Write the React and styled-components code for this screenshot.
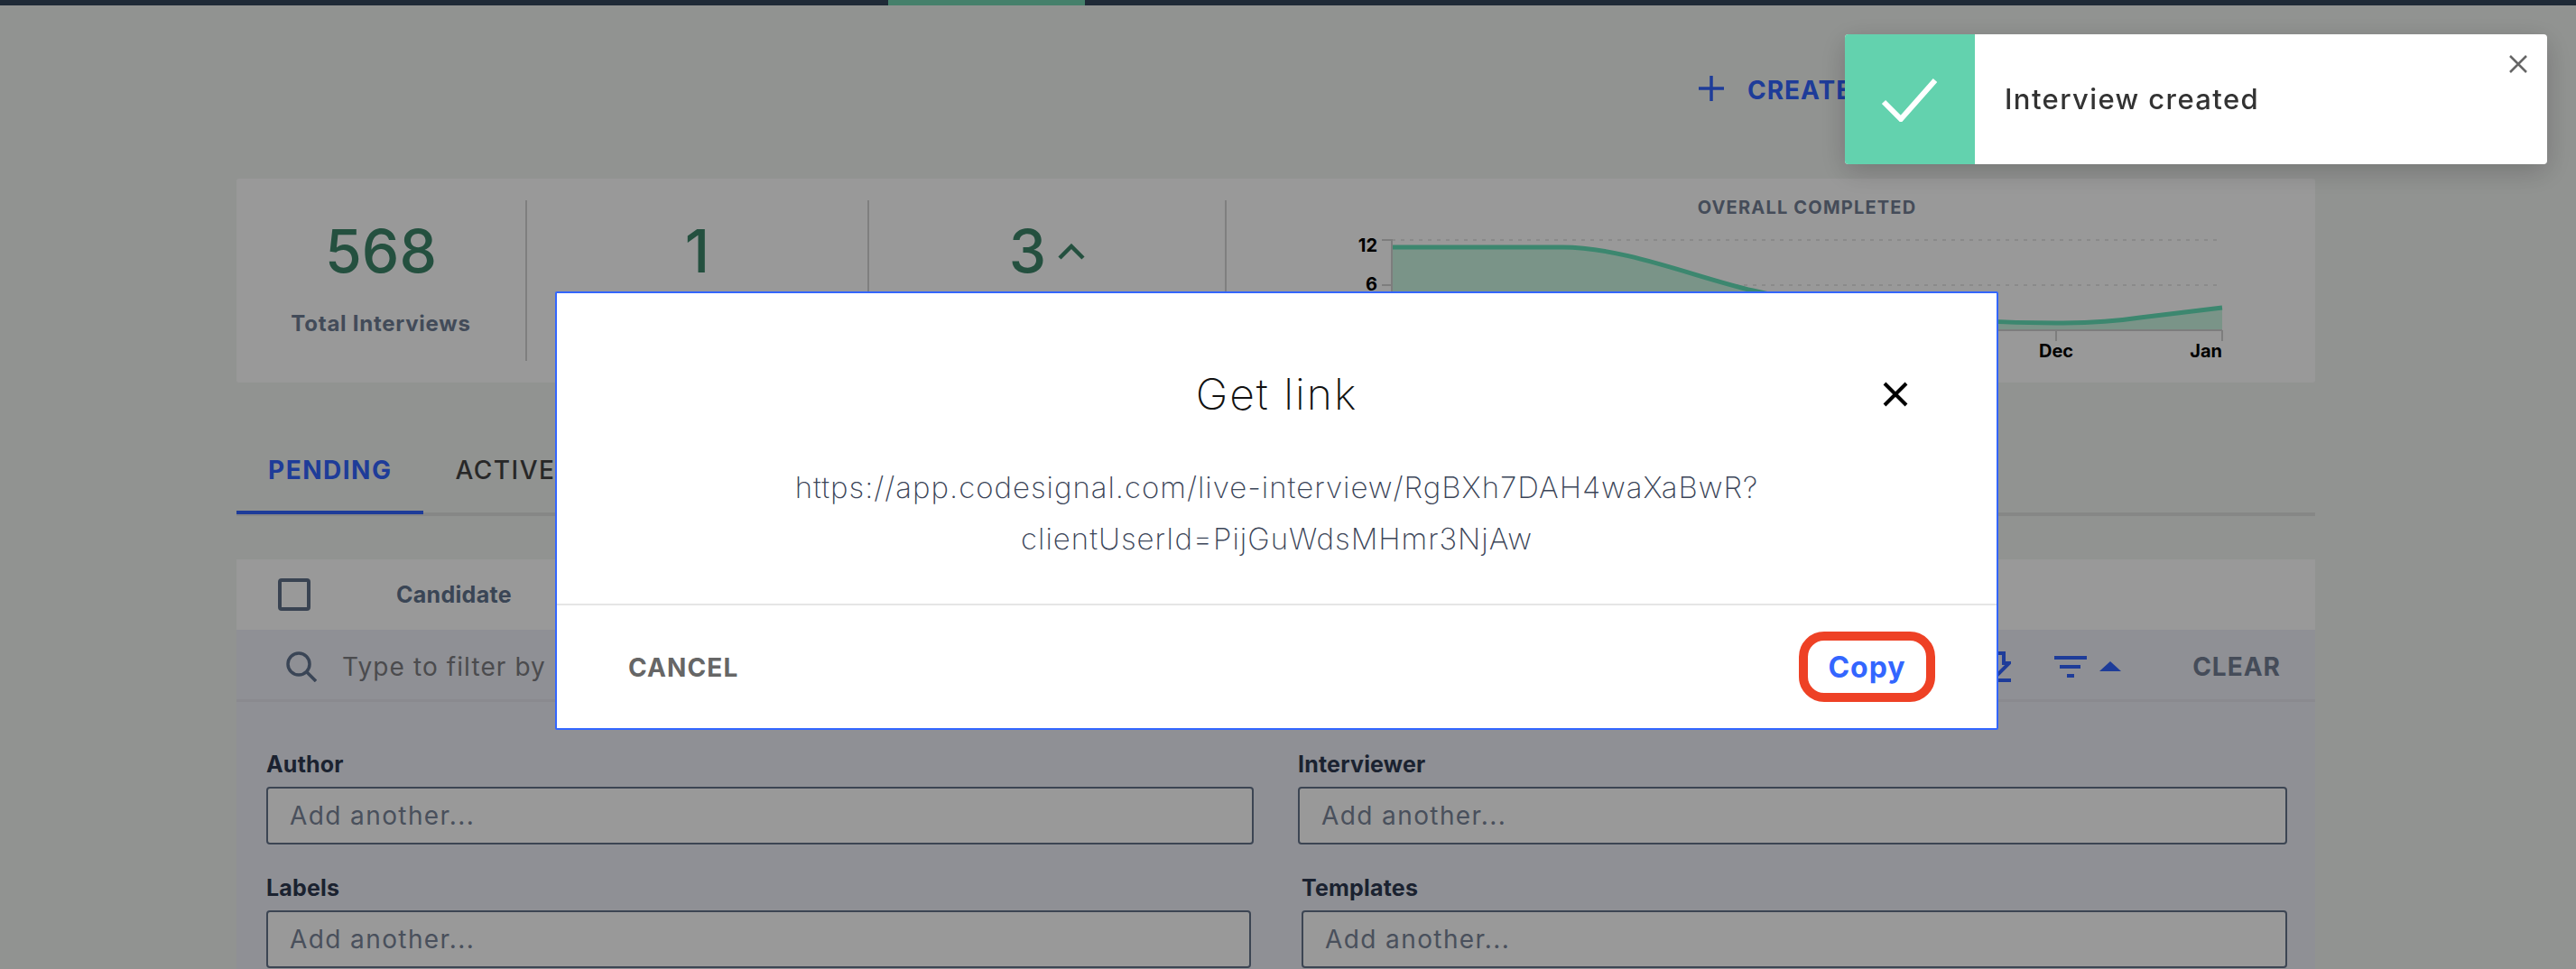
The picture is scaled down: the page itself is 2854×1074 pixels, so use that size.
import React from 'react'
import styled, { createGlobalStyle } from 'styled-components'

const Global = createGlobalStyle`
  html, body {
    margin: 0;
    height: 1074px;
    overflow: hidden;
    background: #f2f5f2;
    font-family: Inter, "Liberation Sans", sans-serif;
  }
  * { box-sizing: border-box; }
`

const TopBar = styled.div`
  height: 6px;
  background: #34465d;
  padding-left: 984px;
`
const Progress = styled.div`
  width: 218px;
  height: 100%;
  background: #73d5b3;
`
const Main = styled.main`
  width: 2303px;
  margin-left: 262px;
`
const ActionRow = styled.div`
  height: 192px;
  padding: 76px 0 0 1620px;
  display: flex;
  align-items: flex-start;
  gap: 26px;
`
const CreateText = styled.span`
  font-size: 28px;
  line-height: 36px;
  font-weight: 700;
  letter-spacing: 1px;
  color: #3264ff;
  white-space: nowrap;
`
const StatsCard = styled.section`
  height: 226px;
  padding: 24px 0;
  background: #fff;
  border-radius: 3px;
  display: flex;
`
const Stat = styled.div`
  width: ${p => p.$w}px;
  border-right: 2px solid #d4d4d4;
  text-align: center;
`
const StatValue = styled.div`
  height: 96px;
  padding-top: 18px;
  font-size: 66px;
  line-height: 76px;
  font-weight: 500;
  color: #3c856a;
  display: flex;
  justify-content: center;
  gap: 13px;
  svg { margin-top: 30px; }
`
const StatLabel = styled.div`
  margin-top: 26px;
  font-size: 24px;
  line-height: 30px;
  font-weight: 700;
  letter-spacing: 0.75px;
  color: #6f7d94;
`
const Chart = styled.div`
  flex: 1;
  padding: 0 41px 0 121px;
`
const ChartTitle = styled.div`
  height: 16px;
  margin-bottom: 12px;
  font-size: 20px;
  line-height: 16px;
  font-weight: 700;
  letter-spacing: 1.2px;
  text-align: center;
  color: #737f95;
`
const Tabs = styled.nav`
  margin-top: 48px;
  height: 100px;
  display: flex;
  border-bottom: 4px solid #dfe2df;
`
const Tab = styled.div`
  height: 98px;
  padding: 31px 35px 0;
  font-size: 28px;
  line-height: 36px;
  font-weight: ${p => (p.$active ? 700 : 500)};
  letter-spacing: 1.5px;
  color: ${p => (p.$active ? '#3264ff' : '#444')};
  border-bottom: 4px solid ${p => (p.$active ? '#3264ff' : 'transparent')};
`
const TableHead = styled.div`
  margin-top: 48px;
  height: 78px;
  padding-left: 46px;
  background: #fff;
  display: flex;
  align-items: center;
`
const Check = styled.span`
  width: 36px;
  height: 36px;
  border: 4px solid #5f7189;
  border-radius: 4px;
`
const ColTitle = styled.span`
  margin-left: 95px;
  font-size: 25px;
  font-weight: 700;
  letter-spacing: 0.3px;
  color: #62748e;
`
const FilterBar = styled.div`
  height: 80px;
  padding: 4px 38px 0 55px;
  display: flex;
  align-items: center;
  background: #eef0f8;
  border-bottom: 3px solid #e6e7ee;
`
const FilterText = styled.span`
  flex: 1;
  margin-left: 28px;
  font-size: 28px;
  letter-spacing: 1.1px;
  color: #7e7e82;
`
const ClearText = styled.span`
  margin-left: 79px;
  font-size: 28px;
  font-weight: 700;
  letter-spacing: 1px;
  color: #737f95;
`
const FilterPanel = styled.div`
  height: 296px;
  padding: 53px 31px 0 33px;
  background: #eef0f8;
`
const FieldRow = styled.div`
  display: grid;
  grid-template-columns: ${p => p.$cols};
  gap: ${p => p.$gap}px;
  margin-bottom: 32px;
`
const Field = styled.div``
const FieldLabel = styled.label`
  display: block;
  height: 32px;
  margin-bottom: 9px;
  font-size: 25px;
  line-height: 32px;
  font-weight: 700;
  letter-spacing: 0.2px;
  color: #2d3950;
`
const AddBox = styled.div`
  height: 64px;
  padding-left: 24px;
  display: flex;
  align-items: center;
  background: #fff;
  border: 2px solid #64748b;
  border-radius: 4px;
  font-size: 28px;
  letter-spacing: 1.4px;
  color: #7b8699;
`
const Backdrop = styled.div`
  position: fixed;
  inset: 0;
  background: rgba(0, 0, 0, 0.4);
`
const Modal = styled.div`
  position: absolute;
  left: 615px;
  top: 323px;
  width: 1599px;
  height: 486px;
  background: #fff;
  border: 2px solid #3366ff;
  border-radius: 2px;
`
const ModalHead = styled.div`
  position: relative;
  height: 124px;
  padding-top: 84px;
  text-align: center;
  font-size: 48px;
  line-height: 56px;
  font-weight: 200;
  letter-spacing: 2px;
  color: #111;
  svg { position: absolute; left: 1469px; top: 98px; }
`
const ModalBody = styled.div`
  height: 222px;
  padding-top: 63px;
  text-align: center;
  font-size: 33px;
  line-height: 57px;
  font-weight: 200;
  letter-spacing: 0.97px;
  color: #3b4558;
  border-bottom: 2px solid #e5e5e5;
`
const ModalFoot = styled.div`
  height: 136px;
  padding: 0 68px 0 79px;
  display: flex;
  align-items: center;
  justify-content: space-between;
`
const CancelBtn = styled.span`
  font-size: 28px;
  font-weight: 700;
  letter-spacing: 1.1px;
  color: #666;
  margin-top: 2px;
`
const CopyBtn = styled.span`
  width: 151px;
  height: 78px;
  display: flex;
  align-items: center;
  justify-content: center;
  border: 10px solid #ee4125;
  border-radius: 28px;
  font-size: 32px;
  font-weight: 700;
  letter-spacing: 1px;
  color: #3366ff;
`
const Toast = styled.div`
  position: absolute;
  left: 2044px;
  top: 38px;
  width: 778px;
  height: 144px;
  display: flex;
  background: #fff;
  border-radius: 4px;
  overflow: hidden;
  box-shadow: 0 8px 30px rgba(0, 0, 0, 0.2);
`
const ToastIcon = styled.div`
  width: 144px;
  background: #63d2ae;
  display: flex;
  align-items: center;
  justify-content: center;
`
const ToastText = styled.div`
  flex: 1;
  padding: 52px 0 0 33px;
  font-size: 31px;
  line-height: 40px;
  font-weight: 500;
  letter-spacing: 1.4px;
  color: #333;
`
const ToastClose = styled.svg`
  margin: 23px 22px 0 0;
`

const ChartSvg = () => (
  <svg width="1044" height="150" viewBox="0 0 1044 150">
    <path d="M62 16H982M62 66H982" stroke="#e6e6e6" strokeWidth="2" strokeDasharray="4 6" fill="none" />
    <path
      d="M62 24H251C320 24 400 58 462 72C560 95 680 108 798 108C840 108 865 106 891 102L982 91V116H62Z"
      fill="#cbf7e3"
    />
    <path
      d="M62 24H251C320 24 400 58 462 72C560 95 680 108 798 108C840 108 865 106 891 102L982 91"
      stroke="#64e1b9"
      strokeWidth="5"
      fill="none"
    />
    <path d="M51 16H62V116H982M51 66H62M798 116V128M982 116V128" stroke="#d0d0d0" strokeWidth="2" fill="none" />
    <g fontFamily="Inter, sans-serif" fontWeight="700" fontSize="20" fill="#000">
      <text x="46" y="29" textAnchor="end">12</text>
      <text x="46" y="72" textAnchor="end">6</text>
      <text x="798" y="146" textAnchor="middle">Dec</text>
      <text x="982" y="146" textAnchor="end">Jan</text>
    </g>
  </svg>
)

const App = () => (
  <>
    <Global />
    <TopBar><Progress /></TopBar>
    <Main>
      <ActionRow>
        <svg width="28" height="28" viewBox="0 0 28 28" style={{ marginTop: 2 }}>
          <path d="M14 0V28M0 14H28" stroke="#3264ff" strokeWidth="3.5" />
        </svg>
        <CreateText>CREATE INTERVIEW</CreateText>
      </ActionRow>
      <StatsCard>
        <Stat $w={322}>
          <StatValue>568</StatValue>
          <StatLabel>Total Interviews</StatLabel>
        </Stat>
        <Stat $w={379}>
          <StatValue>1</StatValue>
        </Stat>
        <Stat $w={396}>
          <StatValue>
            3
            <svg width="30" height="18" viewBox="0 0 30 18">
              <path d="M2 16L15 3L28 16" stroke="#3c856a" strokeWidth="4.5" fill="none" />
            </svg>
          </StatValue>
        </Stat>
        <Chart>
          <ChartTitle>OVERALL COMPLETED</ChartTitle>
          <ChartSvg />
        </Chart>
      </StatsCard>
      <Tabs>
        <Tab $active>PENDING</Tab>
        <Tab>ACTIVE</Tab>
      </Tabs>
      <TableHead>
        <Check />
        <ColTitle>Candidate</ColTitle>
      </TableHead>
      <FilterBar>
        <svg width="34" height="34" viewBox="0 0 34 34">
          <circle cx="14" cy="14" r="12" stroke="#61748f" strokeWidth="3.5" fill="none" />
          <path d="M23 23L33 33" stroke="#61748f" strokeWidth="3.5" />
        </svg>
        <FilterText>Type to filter by</FilterText>
        <svg width="32" height="34" viewBox="0 0 32 34">
          <path d="M8 2H24V13H30L16 27L2 13H8ZM0 32H32" stroke="#3264ff" strokeWidth="4" fill="none" />
        </svg>
        <svg width="36" height="24" viewBox="0 0 36 24" style={{ marginLeft: 48 }}>
          <path d="M0 2H36M6 12H29M14 22H22" stroke="#3264ff" strokeWidth="4" />
        </svg>
        <svg width="24" height="11" viewBox="0 0 24 11" style={{ marginLeft: 14 }}>
          <path d="M12 0L24 11H0Z" fill="#3264ff" />
        </svg>
        <ClearText>CLEAR</ClearText>
      </FilterBar>
      <FilterPanel>
        <FieldRow $cols="1094px 1096px" $gap={49}>
          <Field>
            <FieldLabel>Author</FieldLabel>
            <AddBox>Add another...</AddBox>
          </Field>
          <Field>
            <FieldLabel>Interviewer</FieldLabel>
            <AddBox>Add another...</AddBox>
          </Field>
        </FieldRow>
        <FieldRow $cols="1091px 1092px" $gap={56}>
          <Field>
            <FieldLabel>Labels</FieldLabel>
            <AddBox>Add another...</AddBox>
          </Field>
          <Field>
            <FieldLabel>Templates</FieldLabel>
            <AddBox>Add another...</AddBox>
          </Field>
        </FieldRow>
      </FilterPanel>
    </Main>
    <Backdrop>
      <Modal>
        <ModalHead>
          Get link
          <svg width="28" height="28" viewBox="0 0 28 28">
            <path d="M2 2L26 26M26 2L2 26" stroke="#000" strokeWidth="4" />
          </svg>
        </ModalHead>
        <ModalBody>
          https://app.codesignal.com/live-interview/RgBXh7DAH4waXaBwR?
          <br />
          clientUserId=PijGuWdsMHmr3NjAw
        </ModalBody>
        <ModalFoot>
          <CancelBtn>CANCEL</CancelBtn>
          <CopyBtn>Copy</CopyBtn>
        </ModalFoot>
      </Modal>
      <Toast>
        <ToastIcon>
          <svg width="64" height="50" viewBox="0 0 64 50">
            <path d="M3 28L22 47L60 4" stroke="#fff" strokeWidth="6" fill="none" />
          </svg>
        </ToastIcon>
        <ToastText>Interview created</ToastText>
        <ToastClose width="20" height="20" viewBox="0 0 20 20">
          <path d="M1 1L19 19M19 1L1 19" stroke="#666" strokeWidth="2.5" />
        </ToastClose>
      </Toast>
    </Backdrop>
  </>
)

export default App
